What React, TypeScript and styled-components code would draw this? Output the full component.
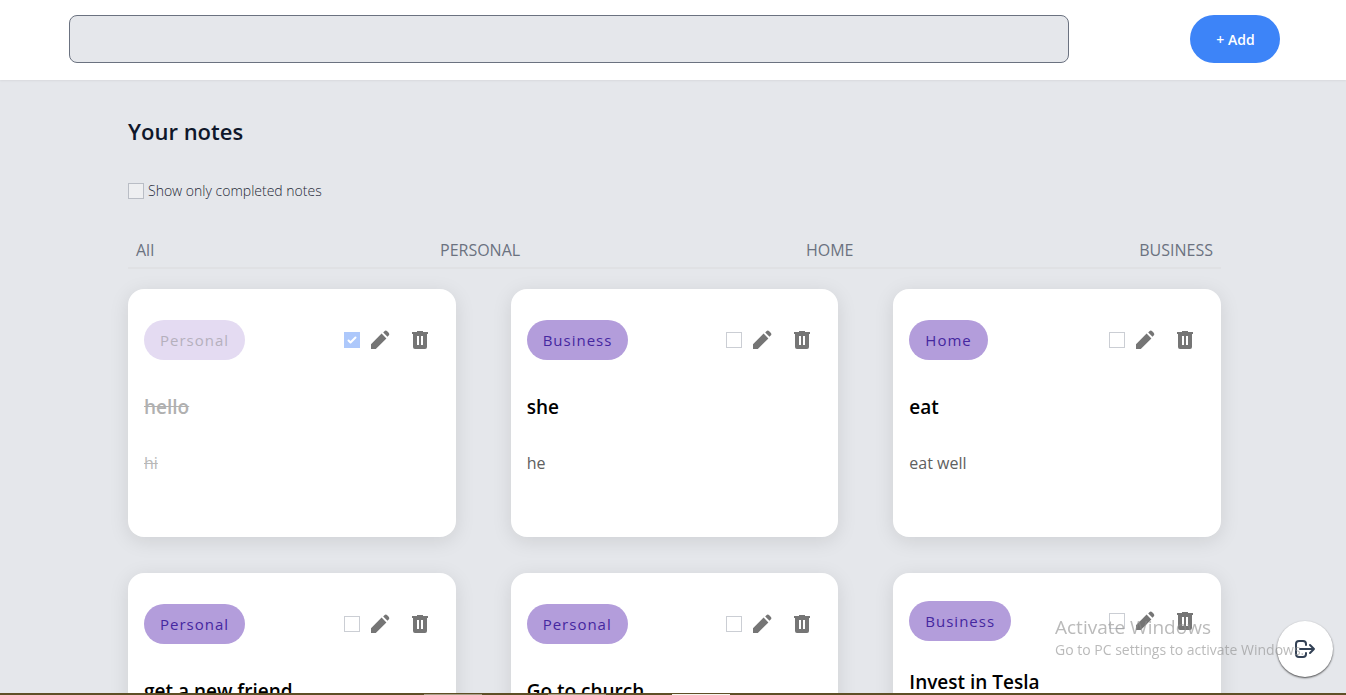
import React from "react";
import styled, { createGlobalStyle, css } from "styled-components";

const GlobalStyle = createGlobalStyle`
  *, *::before, *::after { box-sizing: border-box; }
  body {
    margin: 0;
    background: #e5e7eb;
    font-family: "Segoe UI", "Open Sans", "Noto Sans", sans-serif;
  }
  button, input { font-family: inherit; margin: 0; }
`;

const Screen = styled.div`
  display: flex;
  flex-direction: column;
  height: 100vh;
`;

const TopBar = styled.header`
  position: relative;
  z-index: 1;
  flex: none;
  display: flex;
  align-items: center;
  gap: 121px;
  height: 80px;
  padding: 0 66px 2px 69px;
  background: #fff;
  box-shadow: 0 1px 2px rgba(0, 0, 0, 0.06);
`;

const SearchInput = styled.input`
  flex: 1;
  min-width: 0;
  height: 48px;
  padding: 8px 12px;
  border: 1px solid #6b7280;
  border-radius: 8px;
  background: #e5e7eb;
  font-size: 16px;
`;

const AddButton = styled.button`
  flex: none;
  width: 90px;
  height: 48px;
  padding: 1px 0 0 1px;
  border: 0;
  border-radius: 24px;
  background: #3d84f8;
  color: #fff;
  font-size: 14px;
  font-weight: 600;
`;

const Main = styled.main`
  flex: 1;
  min-height: 0;
  overflow-y: auto;
  scrollbar-width: none;
  padding: 33px 125px 36px 128px;
`;

const Title = styled.h1`
  margin: 0;
  color: #0f172a;
  font-size: 22px;
  font-weight: 600;
  line-height: 36px;
`;

const boxStyle = css`
  appearance: none;
  flex: none;
  display: block;
  width: 16px;
  height: 16px;
  border-radius: 0;
`;

const FilterLabel = styled.label`
  display: flex;
  align-items: center;
  gap: 4px;
  margin-top: 32px;
  color: #1f2937;
  font-size: 14px;
  font-weight: 300;
  line-height: 20px;
`;

const FilterBox = styled.input`
  ${boxStyle}
  border: 1px solid #b9bdc5;
  background: #eeeff1;
`;

const Tabs = styled.nav`
  display: flex;
  justify-content: space-between;
  margin-top: 34px;
  border-bottom: 2px solid #e0e1e4;
`;

const Tab = styled.button`
  padding: 0 8px 2px;
  border: 0;
  background: none;
  color: #6b7280;
  font-size: 16px;
  font-weight: 400;
  line-height: 30px;
`;

const Grid = styled.section`
  display: grid;
  grid-template-columns: repeat(3, minmax(0, 1fr));
  gap: 36px 55px;
  margin-top: 20px;
`;

const Card = styled.article`
  display: flex;
  flex-direction: column;
  justify-content: space-around;
  min-height: 248px;
  padding: 16px;
  border-radius: 16px;
  background: #fff;
  box-shadow: 0 4px 20px rgba(0, 0, 0, 0.1);
`;

const CardHead = styled.div`
  display: flex;
  align-items: center;
  height: 40px;
`;

const Badge = styled.span<{ $done: boolean }>`
  margin-right: auto;
  padding: 0 16px;
  border-radius: 20px;
  background: #b39ddb;
  color: #4527a0;
  font-size: 15px;
  font-weight: 400;
  letter-spacing: 1px;
  line-height: 40px;
  ${(p) => p.$done && css`background: #e4dbf2; color: #b5b0bd;`}
`;

const DoneBox = styled.input`
  ${boxStyle}
  border: 1px solid #cbced4;
  background: #fff;
  &:checked {
    border: 0;
    background: #adc8fb
      url("data:image/svg+xml,%3Csvg viewBox='0 0 16 16' fill='white' xmlns='http://www.w3.org/2000/svg'%3E%3Cpath d='M12.207 4.793a1 1 0 010 1.414l-5 5a1 1 0 01-1.414 0l-2-2a1 1 0 011.414-1.414L6.5 9.086l4.293-4.293a1 1 0 011.414 0z'/%3E%3C/svg%3E");
  }
`;

const IconButton = styled.button`
  display: block;
  width: 40px;
  height: 40px;
  padding: 8px;
  border: 0;
  background: none;
  color: #757575;
  svg { display: block; }
`;

const NoteTitle = styled.h2<{ $done: boolean }>`
  margin: 0;
  color: ${(p) => (p.$done ? "#b0b0b0" : "#000")};
  font-size: 19px;
  font-weight: 600;
  line-height: 34px;
  text-decoration: ${(p) => (p.$done ? "line-through" : "none")};
`;

const NoteText = styled.p<{ $done: boolean; $lines: number }>`
  margin: 0;
  min-height: ${(p) => 34 + 18 * p.$lines}px;
  color: ${(p) => (p.$done ? "#b8b8b8" : "#606060")};
  font-size: 16px;
  font-weight: 400;
  line-height: 18px;
  text-decoration: ${(p) => (p.$done ? "line-through" : "none")};
`;

const LogoutButton = styled.button`
  position: fixed;
  right: 13px;
  bottom: 18px;
  display: flex;
  align-items: center;
  justify-content: center;
  width: 56px;
  height: 56px;
  padding: 0;
  border: 0;
  border-radius: 50%;
  background: #fff;
  color: #334155;
  box-shadow: 0 1px 2px rgba(0, 0, 0, 0.7);
`;

const Watermark = styled.aside`
  position: fixed;
  right: 40px;
  bottom: 35px;
  width: 251px;
  color: rgba(140, 140, 140, 0.6);
  white-space: nowrap;
  pointer-events: none;
`;

const WatermarkTitle = styled.div`
  font-size: 19px;
  line-height: 26px;
`;

const WatermarkText = styled.div`
  font-size: 14px;
  line-height: 20px;
`;

const Taskbar = styled.footer`
  position: relative;
  flex: none;
  display: flex;
  gap: 66px;
  height: 2px;
  padding-left: 424px;
  background: #5e4f26;
`;

const TaskWindow = styled.span<{ $active?: boolean }>`
  width: 58px;
  margin-top: 1px;
  background: ${(p) => (p.$active ? "#f4f4ec" : "#a89f88")};
`;

interface Note {
  category: string;
  title: string;
  text: string;
  done?: boolean;
  lines?: number;
}

const notes: Note[] = [
  { category: "Personal", title: "hello", text: "hi", done: true },
  { category: "Business", title: "she", text: "he" },
  { category: "Home", title: "eat", text: "eat well" },
  { category: "Personal", title: "get a new friend", text: "" },
  { category: "Personal", title: "Go to church", text: "" },
  { category: "Business", title: "Invest in Tesla", text: "", lines: 2 },
];

const EditIcon = () => (
  <svg width="24" height="24" viewBox="0 0 24 24" fill="currentColor" aria-hidden="true">
    <path d="M3 16.2V21h4.8L18.4 10.4l-4.8-4.8zM20.7 7.6a2 2 0 0 0 0-2.8l-1.5-1.5a2 2 0 0 0-2.8 0l-1.2 1.2 4.3 4.3z" />
  </svg>
);

const TrashIcon = () => (
  <svg width="24" height="24" viewBox="0 0 24 24" fill="currentColor" fillRule="evenodd" aria-hidden="true">
    <path d="M9 3h6v1h5v2h-1v13a2 2 0 0 1-2 2H7a2 2 0 0 1-2-2V6H4V4h5zM9 8v9h2V8zM13 8v9h2V8z" />
  </svg>
);

const LogoutIcon = () => (
  <svg width="24" height="24" viewBox="0 0 24 24" fill="none" stroke="currentColor" strokeWidth="2" strokeLinecap="round" strokeLinejoin="round" aria-hidden="true">
    <path d="M17 16l4-4m0 0l-4-4m4 4H7m6 4v1a3 3 0 01-3 3H6a3 3 0 01-3-3V7a3 3 0 013-3h4a3 3 0 013 3v1" />
  </svg>
);

function NoteCard({ category, title, text, done = false, lines = 1 }: Note) {
  return (
    <Card>
      <CardHead>
        <Badge $done={done}>{category}</Badge>
        <DoneBox type="checkbox" defaultChecked={done} aria-label={`Mark ${title} as completed`} />
        <IconButton type="button" aria-label={`Edit ${title}`}>
          <EditIcon />
        </IconButton>
        <IconButton type="button" aria-label={`Delete ${title}`}>
          <TrashIcon />
        </IconButton>
      </CardHead>
      <NoteTitle $done={done}>{title}</NoteTitle>
      <NoteText $done={done} $lines={lines}>{text}</NoteText>
    </Card>
  );
}

export default function App() {
  return (
    <Screen>
      <GlobalStyle />
      <TopBar>
        <SearchInput type="text" aria-label="Search notes" />
        <AddButton type="button">+ Add</AddButton>
      </TopBar>
      <Main>
        <Title>Your notes</Title>
        <FilterLabel>
          <FilterBox type="checkbox" />
          Show only completed notes
        </FilterLabel>
        <Tabs>
          {["All", "PERSONAL", "HOME", "BUSINESS"].map((name) => (
            <Tab type="button" key={name}>{name}</Tab>
          ))}
        </Tabs>
        <Grid>
          {notes.map((note) => (
            <NoteCard key={note.title} {...note} />
          ))}
        </Grid>
      </Main>
      <LogoutButton type="button" aria-label="Log out">
        <LogoutIcon />
      </LogoutButton>
      <Watermark>
        <WatermarkTitle>Activate Windows</WatermarkTitle>
        <WatermarkText>Go to PC settings to activate Windows.</WatermarkText>
      </Watermark>
      <Taskbar>
        <TaskWindow />
        <TaskWindow />
        <TaskWindow $active />
      </Taskbar>
    </Screen>
  );
}
